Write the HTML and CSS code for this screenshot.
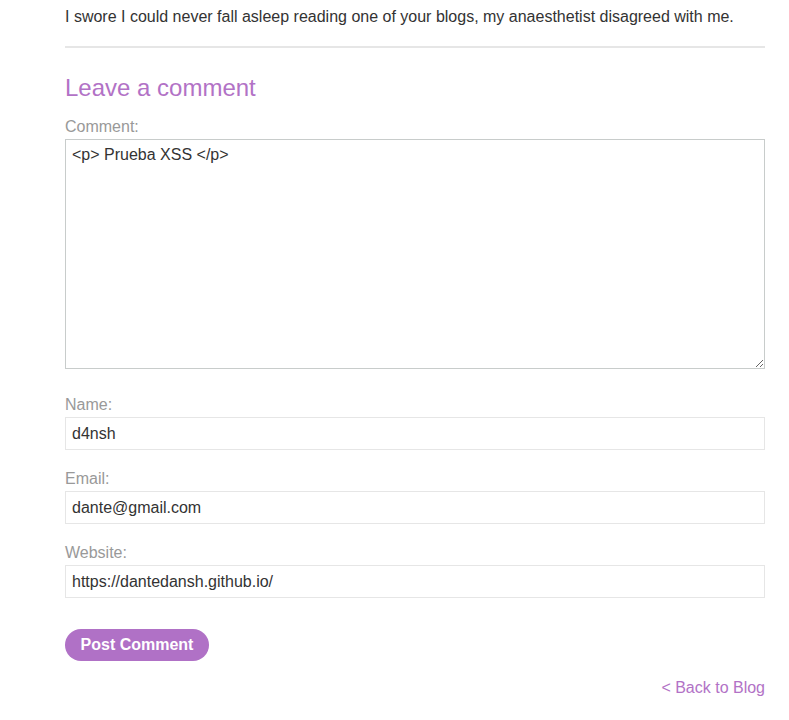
FILE: index.html
```html
<!DOCTYPE html>
<html>
<head>
<meta charset="utf-8">
<link rel="stylesheet" href="styles.css">
</head>
<body>
<div class="page">
  <p class="comment-text">I swore I could never fall asleep reading one of your blogs, my anaesthetist disagreed with me.</p>
  <hr class="divider">
  <section class="add-comment">
    <h2 class="title">Leave a comment</h2>
    <form class="form">
      <label class="label label-first">Comment:</label>
      <textarea class="textarea">&lt;p&gt; Prueba XSS &lt;/p&gt;</textarea>
      <label class="label label-after-area">Name:</label>
      <input class="input" type="text" value="d4nsh">
      <label class="label">Email:</label>
      <input class="input" type="text" value="dante@gmail.com">
      <label class="label">Website:</label>
      <input class="input" type="text" value="https://dantedansh.github.io/">
      <div class="actions"><button class="button" type="button">Post Comment</button></div>
    </form>
  </section>
  <div class="back"><a class="back-link" href="#">&lt; Back to Blog</a></div>
</div>
</body>
</html>
```

FILE: styles.css
```css
html, body {
  margin: 0;
  padding: 0;
  background: #ffffff;
}
body {
  font-family: "Liberation Sans", Arial, sans-serif;
  font-size: 16px;
  color: #333333;
}
.page {
  width: 700px;
  margin-left: 65px;
}
.comment-text {
  margin: 0;
  padding-top: 7px;
  line-height: 20px;
}
.divider {
  margin: 19px 0 0 0;
  border: 0;
  height: 2px;
  background: #e6e6e6;
}
.title {
  margin: 26px 0 0 0;
  font-size: 24px;
  font-weight: normal;
  line-height: 28px;
  color: #b272c6;
}
.form {
  display: flex;
  flex-direction: column;
  align-items: flex-start;
}
.label {
  display: block;
  line-height: 20px;
  color: #999999;
  margin-top: 19px;
  margin-bottom: 2px;
}
.label-first {
  margin-top: 15px;
}
.label-after-area {
  margin-top: 26px;
}
.textarea {
  box-sizing: border-box;
  width: 700px;
  height: 230px;
  margin: 0;
  padding: 6px 6px;
  border: 1px solid #c8cccb;
  font-family: "Liberation Sans", Arial, sans-serif;
  font-size: 16px;
  line-height: 18px;
  color: #333333;
  resize: both;
  background: #fff;
}
.input {
  box-sizing: border-box;
  width: 700px;
  height: 33px;
  margin: 0;
  padding: 0 6px;
  border: 1px solid #e6e6e6;
  font-family: "Liberation Sans", Arial, sans-serif;
  font-size: 16px;
  color: #333333;
  background: #fff;
  outline: none;
}
.actions {
  margin-top: 31px;
}
.button {
  width: 144px;
  height: 32px;
  padding: 0;
  border: 0;
  border-radius: 16px;
  background: #b071c6;
  color: #ffffff;
  font-family: "Liberation Sans", Arial, sans-serif;
  font-size: 16px;
  font-weight: bold;
  cursor: pointer;
}
.back {
  display: flex;
  justify-content: flex-end;
  margin-top: 17px;
  line-height: 20px;
}
.back-link {
  color: #b272c6;
  text-decoration: none;
}
```
